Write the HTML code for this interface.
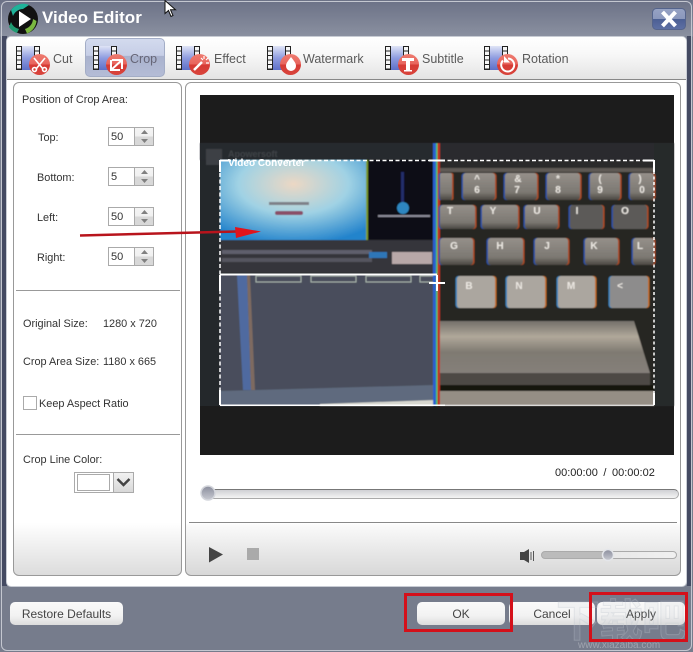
<!DOCTYPE html>
<html><head><meta charset="utf-8"><title>Video Editor</title>
<style>
html,body{margin:0;padding:0;background:#fff}
#w{position:relative;width:693px;height:652px;overflow:hidden;font:10.9px "Liberation Sans",sans-serif;color:#333;background:linear-gradient(#6b7186 0,#8a90a0 36px,#7a8090 37px,#767c8c 100%)}
#w div{position:absolute;box-sizing:border-box}
.t{position:absolute;white-space:nowrap;line-height:14px}
.tb{font-size:12.5px;color:#5a5a5a;top:52px}
.in{width:27px;height:19px;left:108px;border:1px solid #aaa;background:#fff;padding:3px 0 0 2px;font-size:11px;line-height:13px;color:#333}
.sp{width:19px;height:19px;left:135px;border:1px solid #aaa;border-left:0;background:linear-gradient(#f4f4f4 0,#f0f0f0 50%,#d8d8d8 51%,#d8d8d8 100%)}
.btn{top:602px;height:23px;border-radius:5px;background:linear-gradient(#fafafa,#f2f2f2 60%,#dcdcdc);text-align:center;font-size:12px;line-height:24px;color:#444}
.red{border:3px solid #d4101a}
svg{position:absolute;left:0;top:0}
</style></head><body>
<div id="w">
<div style="left:1px;top:1px;width:691px;height:650px;border:1px solid #c4c7d0;border-radius:6px"></div>
<div style="left:2px;top:36px;width:5px;height:550px;background:#444a62"></div>
<div style="left:687px;top:36px;width:4px;height:550px;background:#444a62"></div>
<div style="left:6px;top:36px;width:681px;height:551px;background:#fff;border:1px solid #c8ccd4;border-radius:5px"></div>
<div style="left:7px;top:37px;width:679px;height:43px;background:linear-gradient(#fff,#f8f8f8 40%,#e4e4e4);border-bottom:1px solid #888;border-radius:4px 4px 0 0"></div>
<div style="left:85px;top:38px;width:80px;height:39px;border:1px solid #a3adc6;border-radius:5px;background:linear-gradient(#d3daee 0,#c6cee6 45%,#a9b2cd 46%,#b4bcd6 100%)"></div>

<div class="t" style="left:42px;top:8px;font-size:17px;line-height:20px;font-weight:bold;color:#fff">Video Editor</div>

<div class="t tb" style="left:53px">Cut</div>
<div class="t tb" style="left:130px;color:#667">Crop</div>
<div class="t tb" style="left:214px">Effect</div>
<div class="t tb" style="left:303px">Watermark</div>
<div class="t tb" style="left:422px">Subtitle</div>
<div class="t tb" style="left:522px">Rotation</div>

<!-- left panel -->
<div style="left:13px;top:82px;width:169px;height:494px;border:1px solid #999;border-radius:6px;background:linear-gradient(#fff 0,#fff 440px,#dcdcdc 100%)"></div>
<div style="left:16px;top:290px;width:164px;height:1px;background:#999"></div>
<div style="left:16px;top:434px;width:164px;height:1px;background:#999"></div>
<div class="t" style="left:22px;top:93px">Position of Crop Area:</div>
<div class="t" style="left:38px;top:131px">Top:</div>
<div class="t" style="left:37px;top:171px">Bottom:</div>
<div class="t" style="left:37px;top:211px">Left:</div>
<div class="t" style="left:37px;top:251px">Right:</div>
<div class="in" style="top:127px">50</div><div class="sp" style="top:127px"></div>
<div class="in" style="top:167px">5</div><div class="sp" style="top:167px"></div>
<div class="in" style="top:207px">50</div><div class="sp" style="top:207px"></div>
<div class="in" style="top:247px">50</div><div class="sp" style="top:247px"></div>
<div class="t" style="left:23px;top:317px">Original Size:</div>
<div class="t" style="left:103px;top:317px">1280 x 720</div>
<div class="t" style="left:23px;top:355px">Crop Area Size:</div>
<div class="t" style="left:103px;top:355px">1180 x 665</div>
<div style="left:23px;top:396px;width:14px;height:14px;border:1px solid #aaa;background:#fff"></div>
<div class="t" style="left:39px;top:397px">Keep Aspect Ratio</div>
<div class="t" style="left:23px;top:453px">Crop Line Color:</div>
<div style="left:74px;top:472px;width:60px;height:21px;border:1px solid #aaa;background:#fff"></div>
<div style="left:77px;top:474px;width:33px;height:17px;border:1px solid #aaa;background:#fff"></div>
<div style="left:113px;top:472px;width:21px;height:21px;border:1px solid #aaa;background:linear-gradient(#f2f2f2,#d8d8d8)"></div>

<!-- right panel -->
<div style="left:185px;top:82px;width:496px;height:494px;border:1px solid #999;border-radius:6px;background:linear-gradient(#fff 0,#fff 440px,#fafafa 442px,#d8d8d8 100%)"></div>
<div style="left:189px;top:522px;width:488px;height:1px;background:#888"></div>
<div class="t" style="left:555px;top:466px;color:#222;word-spacing:2.500px;font-size:11px">00:00:00 / 00:00:02</div>
<div style="left:201px;top:489px;width:478px;height:10px;border:1px solid #aaa;border-top-color:#777;border-radius:5px;background:linear-gradient(#cfd0d4,#f4f4f4)"></div>
<div style="left:541px;top:551px;width:136px;height:8px;border:1px solid #aaa;border-radius:4px;background:linear-gradient(90deg,#bbb 0,#bbb 50%,#e8e8e8 50%,#f0f0f0 100%)"></div>

<!-- video -->
<svg width="693" height="652" viewBox="0 0 693 652">
<defs>
<linearGradient id="film" x1="0" y1="0" x2="0" y2="1"><stop offset="0" stop-color="#dfe4f6"/><stop offset=".5" stop-color="#8e9ce0"/><stop offset="1" stop-color="#5e70c8"/></linearGradient>
<linearGradient id="rc" x1="0" y1="0" x2="0" y2="1"><stop offset="0" stop-color="#ee7b70"/><stop offset=".5" stop-color="#e8645c"/><stop offset=".51" stop-color="#d63a34"/><stop offset="1" stop-color="#d8443c"/></linearGradient>
<radialGradient id="scr" cx=".5" cy=".3" r=".75"><stop offset="0" stop-color="#ecd8c4"/><stop offset=".5" stop-color="#a0d2e4"/><stop offset="1" stop-color="#2484cc"/></radialGradient>
<linearGradient id="key" x1="0" y1="0" x2="0" y2="1"><stop offset="0" stop-color="#95908a"/><stop offset=".72" stop-color="#7c7872"/><stop offset="1" stop-color="#4a4742"/></linearGradient>
<linearGradient id="bar" x1="0" y1="0" x2="0" y2="1"><stop offset="0" stop-color="#74706a"/><stop offset=".3" stop-color="#b0a89a"/><stop offset=".6" stop-color="#7f7a72"/><stop offset="1" stop-color="#85807a"/></linearGradient>
<linearGradient id="thumb" x1="0" y1="0" x2="0" y2="1"><stop offset="0" stop-color="#8a8d9c"/><stop offset="1" stop-color="#c8cad2"/></linearGradient>
<linearGradient id="cl" x1="0" y1="0" x2="0" y2="1"><stop offset="0" stop-color="#97a3c4"/><stop offset=".5" stop-color="#8a97bc"/><stop offset=".51" stop-color="#4c5f94"/><stop offset="1" stop-color="#5e70a4"/></linearGradient>
<filter id="b1"><feGaussianBlur stdDeviation=".6"/></filter>
<g id="fm">
<rect x="0" y="0" width="24" height="24" fill="url(#film)"/>
<rect x="0" y="0" width="6" height="24" fill="#222"/>
<rect x="18" y="0" width="6" height="24" fill="#222"/>
<path d="M1 1h4v3.500h-4zM1 5.500h4v3.500h-4zM1 10h4v3.500h-4zM1 14.500h4v3.500h-4zM1 19h4v3.500h-4zM19 1h4v3.500h-4zM19 5.500h4v3.500h-4zM19 10h4v3.500h-4zM19 14.500h4v3.500h-4zM19 19h4v3.500h-4z" fill="#f6f6f6"/>
<circle cx="23.500" cy="18.500" r="10.500" fill="url(#rc)"/>
</g>
<g id="keys">
<rect x="440" y="173" width="12" height="27" rx="2"/><rect x="463" y="173" width="32" height="27" rx="3"/><rect x="505" y="173" width="32" height="27" rx="3"/><rect x="547" y="173" width="33" height="27" rx="3"/><rect x="590" y="173" width="30" height="27" rx="3"/><rect x="630" y="173" width="24" height="27" rx="3"/>
<rect x="440" y="205" width="35" height="24" rx="3"/><rect x="482" y="205" width="36" height="24" rx="3"/><rect x="525" y="205" width="33" height="24" rx="3"/><rect x="570" y="205" width="33" height="24" rx="3"/><rect x="613" y="205" width="34" height="24" rx="3"/>
<rect x="440" y="238" width="33" height="27" rx="3"/><rect x="488" y="238" width="35" height="27" rx="3"/><rect x="535" y="238" width="33" height="27" rx="3"/><rect x="585" y="238" width="33" height="27" rx="3"/><rect x="633" y="238" width="21" height="27" rx="3"/>
</g>
<g id="kb"><rect x="457" y="276" width="38" height="32" rx="3"/><rect x="507" y="276" width="38" height="32" rx="3"/><rect x="558" y="276" width="37" height="32" rx="3"/><rect x="610" y="276" width="38" height="32" rx="3"/></g>
</defs>

<rect x="200" y="95" width="474" height="360" fill="#1c1c1c"/>
<rect x="200" y="143" width="474" height="263" fill="#24282b"/>
<g filter="url(#b1)">
<rect x="200" y="143" width="235" height="17" fill="#282a2e"/>
<rect x="435" y="143" width="239" height="20" fill="#2a2c2e"/>
<rect x="206" y="149" width="16" height="16" fill="#3c4044"/>
<text x="228" y="157" font-size="9" font-weight="bold" fill="#3e4246" font-family="Liberation Sans">Apowersoft</text>
<rect x="220" y="160" width="147" height="80" fill="url(#scr)"/>
<rect x="366" y="160" width="2" height="80" fill="#7a9a30"/>
<rect x="368" y="160" width="66" height="80" fill="#0e0e14"/>
<rect x="401" y="172" width="3" height="32" fill="#2a3a90" opacity=".7"/>
<circle cx="403" cy="208" r="6" fill="#2f86c0"/>
<rect x="378" y="215" width="52" height="2" fill="#8a8a98"/>
<rect x="269" y="202" width="40" height="3" fill="#7e8088"/>
<rect x="275" y="211" width="28" height="4" rx="2" fill="#8a5068"/>
<rect x="220" y="240" width="214" height="33" fill="#34353b"/>
<rect x="222" y="250" width="150" height="4" fill="#5e5e6c"/>
<rect x="222" y="258" width="150" height="4" fill="#55555f"/>
<rect x="369" y="252" width="18" height="6" fill="#2f76b8"/>
<rect x="392" y="252" width="40" height="12" fill="#b8a8a8"/>
<rect x="220" y="275" width="215" height="131" fill="#494e5b"/>
<path d="M220 391 L435 385 V404 L220 406Z" fill="#5f6a7e"/>
<path d="M320 404 L435 400 V406 H320Z" fill="#d8d8d0"/>
<path d="M237 275 L247 275 L251 390 L243 390Z" fill="#4f6ba0"/>
<path d="M247 275 L250 275 L255 390 L251 390Z" fill="#7e6a60"/>
<g fill="none" stroke="#a8b4ac" stroke-width="1"><rect x="256" y="276" width="45" height="6"/><rect x="311" y="276" width="45" height="6"/><rect x="366" y="276" width="45" height="6"/><rect x="420" y="276" width="14" height="6"/></g>
<rect x="433" y="143" width="3" height="263" fill="#2a60d0"/>
<rect x="436" y="143" width="1.500" height="263" fill="#50c070"/>
<rect x="437.500" y="143" width="2.500" height="263" fill="#c03020"/>
<rect x="440" y="163" width="214" height="242" fill="#272524"/>
<rect x="440" y="160" width="214" height="8" fill="#2c2b2a"/>
<rect x="440" y="168" width="214" height="4" fill="#5e5a55"/>
<rect x="654" y="143" width="20" height="263" fill="#262a2c"/>
<use href="#keys" x="-1.500" fill="#2a50a0"/><use href="#keys" x="1.500" fill="#a84a20"/><use href="#keys" fill="url(#key)"/>
<use href="#kb" x="-1.500" fill="#3a80b8"/><use href="#kb" x="1.500" fill="#c06a20"/><use href="#kb" fill="#aba69f"/>
<rect x="570" y="205" width="33" height="24" rx="3" fill="#5c5a58"/><rect x="613" y="205" width="34" height="24" rx="3" fill="#5c5a58"/><rect x="610" y="276" width="38" height="32" rx="3" fill="#8d8c8c"/>
<path d="M440 321H634L650 373H440Z" fill="url(#bar)"/>
<rect x="440" y="373" width="210" height="12" fill="#4e4a44"/>
<rect x="440" y="385" width="214" height="6" fill="#16120e"/>
<rect x="440" y="391" width="214" height="15" fill="#958e85"/>
<g font-family="Liberation Sans" font-weight="bold" font-size="10" fill="#ece8e2" text-anchor="middle">
<text x="477" y="182">^</text><text x="518" y="182">&amp;</text><text x="558" y="182">*</text><text x="600" y="182">(</text><text x="640" y="182">)</text>
<text x="477" y="193">6</text><text x="517" y="193">7</text><text x="558" y="193">8</text><text x="600" y="193">9</text><text x="642" y="193">0</text>
<text x="450" y="214">T</text><text x="493" y="214">Y</text><text x="537" y="214">U</text><text x="577" y="214">I</text><text x="625" y="214">O</text>
<text x="454" y="249">G</text><text x="500" y="249">H</text><text x="547" y="249">J</text><text x="594" y="249">K</text><text x="640" y="249">L</text>
<text x="469" y="289">B</text><text x="519" y="289">N</text><text x="571" y="289">M</text><text x="620" y="289">&lt;</text>
</g>
</g>
<text x="228" y="166" font-size="10" font-weight="bold" fill="#fff" font-family="Liberation Sans">Video Converter</text>
<g fill="none" stroke="#fff" stroke-width="1.500">
<path d="M220 160.500H654" stroke-dasharray="4 2.500"/>
<path d="M220 160.500H231M429 160.500H445M643 160.500H654" stroke-width="2"/>
<path d="M220 160V405" stroke-dasharray="4 2.500"/>
<path d="M220 160V172M220 275V291M220 390V405" stroke-width="2"/>
<path d="M654 160V405" stroke-dasharray="3 2.500"/>
<path d="M654 160V172M654 393V405" stroke-width="2"/>
<path d="M220 405.200H445" stroke-width="1.500"/>
<path d="M445 405.200H654" stroke-width="1"/>
<path d="M220 274.500H437" stroke-width="2"/>
<path d="M429 283H445" stroke-width="2"/>
<path d="M437 275V291" stroke-width="2"/>
</g>
<path d="M80 235.500L237 231.500" stroke="#b8141c" stroke-width="2.500" fill="none"/>
<path d="M235 227L261 231.500L236 238Z" fill="#e0141c"/>

<!-- logo -->
<circle cx="23" cy="19" r="15" fill="#111"/>
<path d="M11 10A15 15 0 0 1 29 5L23 9A11 11 0 0 0 13 16Z" fill="#1fb39a"/>
<path d="M36.500 21A15 15 0 0 1 27 33.500L25 29A11 11 0 0 0 33 19Z" fill="#7ab840"/>
<path d="M9 27A15 15 0 0 0 17 33L19 29A11 11 0 0 1 11 22Z" fill="#1f9a70"/>
<path d="M19 11L31 19L19 27Z" fill="#fff"/>

<!-- toolbar icons -->
<use href="#fm" x="16" y="46"/>
<use href="#fm" x="93" y="46"/>
<use href="#fm" x="176" y="46"/>
<use href="#fm" x="267" y="46"/>
<use href="#fm" x="385" y="46"/>
<use href="#fm" x="484" y="46"/>
<g fill="none" stroke="#fff" stroke-width="1.600">
<path d="M34 58L43 69M45 58L36 69"/><circle cx="34.500" cy="69.500" r="2"/><circle cx="44.500" cy="69.500" r="2"/>
<path d="M112 60H122V69M111 60V70H120M111 70L122 60" stroke-width="2"/>
<path d="M194 70L202 62" stroke-width="2.500"/><path d="M204 56V59M208 58L206 60M209 63H206M201 58L203 60" stroke-width="1.200"/>
</g>
<path d="M291 57C294 61 296 63 296 66A5 5 0 0 1 286 66C286 63 288 61 291 57Z" fill="#fff"/>
<path d="M402 58H414V61H410V70H412V71.500H404V70H406V61H402Z" fill="#fff"/>
<path d="M503 60.500A6.500 6.500 0 1 0 508 58.500" fill="none" stroke="#fff" stroke-width="2"/><path d="M504 56V62.500H510Z" fill="#fff"/>

<!-- close -->
<rect x="652.500" y="8.500" width="33" height="21" rx="4" fill="url(#cl)" stroke="#55648c"/>
<path d="M662.500 12L675.500 26M675.500 12L662.500 26" stroke="#fff" stroke-width="4" fill="none"/>

<!-- spin arrows -->
<g fill="#808080">
<path d="M141 134l3.500-4 3.500 4zM141 139h7l-3.500 4z"/>
<path d="M141 174l3.500-4 3.500 4zM141 179h7l-3.500 4z"/>
<path d="M141 214l3.500-4 3.500 4zM141 219h7l-3.500 4z"/>
<path d="M141 254l3.500-4 3.500 4zM141 259h7l-3.500 4z"/>
</g>
<path d="M117.500 480L123.500 486L129.500 480" transform="translate(0 -1)" fill="none" stroke="#444" stroke-width="2.500"/>

<!-- player -->
<circle cx="208" cy="493" r="7" fill="url(#thumb)" stroke="#d4d6dc" stroke-width="1.500"/>
<path d="M209 547L223 554.500L209 562.500Z" fill="#444"/>
<rect x="247" y="548" width="12" height="12" fill="#aaa"/>
<path d="M520 552H524L529 549V563L524 560H520Z" fill="#444"/>
<path d="M531 552V560M533.500 551V561" stroke="#555" stroke-width="1"/>
<circle cx="608" cy="555" r="5.500" fill="url(#thumb)" stroke="#e4e6ea" stroke-width="1.500"/>

<!-- cursor -->
<path d="M165 .5V13.500L168.500 10.500L171 16.500L173 15.500L170.500 9.800H175.500Z" fill="#fff" stroke="#111" stroke-width="1"/>
</svg>

<!-- bottom buttons -->
<div class="btn" style="left:10px;width:113px">Restore Defaults</div>
<div class="btn" style="left:417px;width:88px">OK</div>
<div class="btn" style="left:509px;width:86px">Cancel</div>
<div class="btn" style="left:597px;width:88px">Apply</div>

<div class="t" style="left:556px;top:598px;font:bold 44px/48px 'Liberation Sans','Noto Sans CJK SC',sans-serif;color:rgba(190,194,204,.12);-webkit-text-stroke:1px rgba(190,194,204,.3);letter-spacing:-1px">下载吧</div>
<div class="t" style="left:578px;top:640px;font-size:10px;line-height:12px;color:rgba(255,255,255,.3)">www.xiazaiba.com</div>

<div class="red" style="left:404px;top:593px;width:109px;height:39px"></div>
<div class="red" style="left:589px;top:592px;width:99px;height:50px"></div>
</div>
</body></html>
